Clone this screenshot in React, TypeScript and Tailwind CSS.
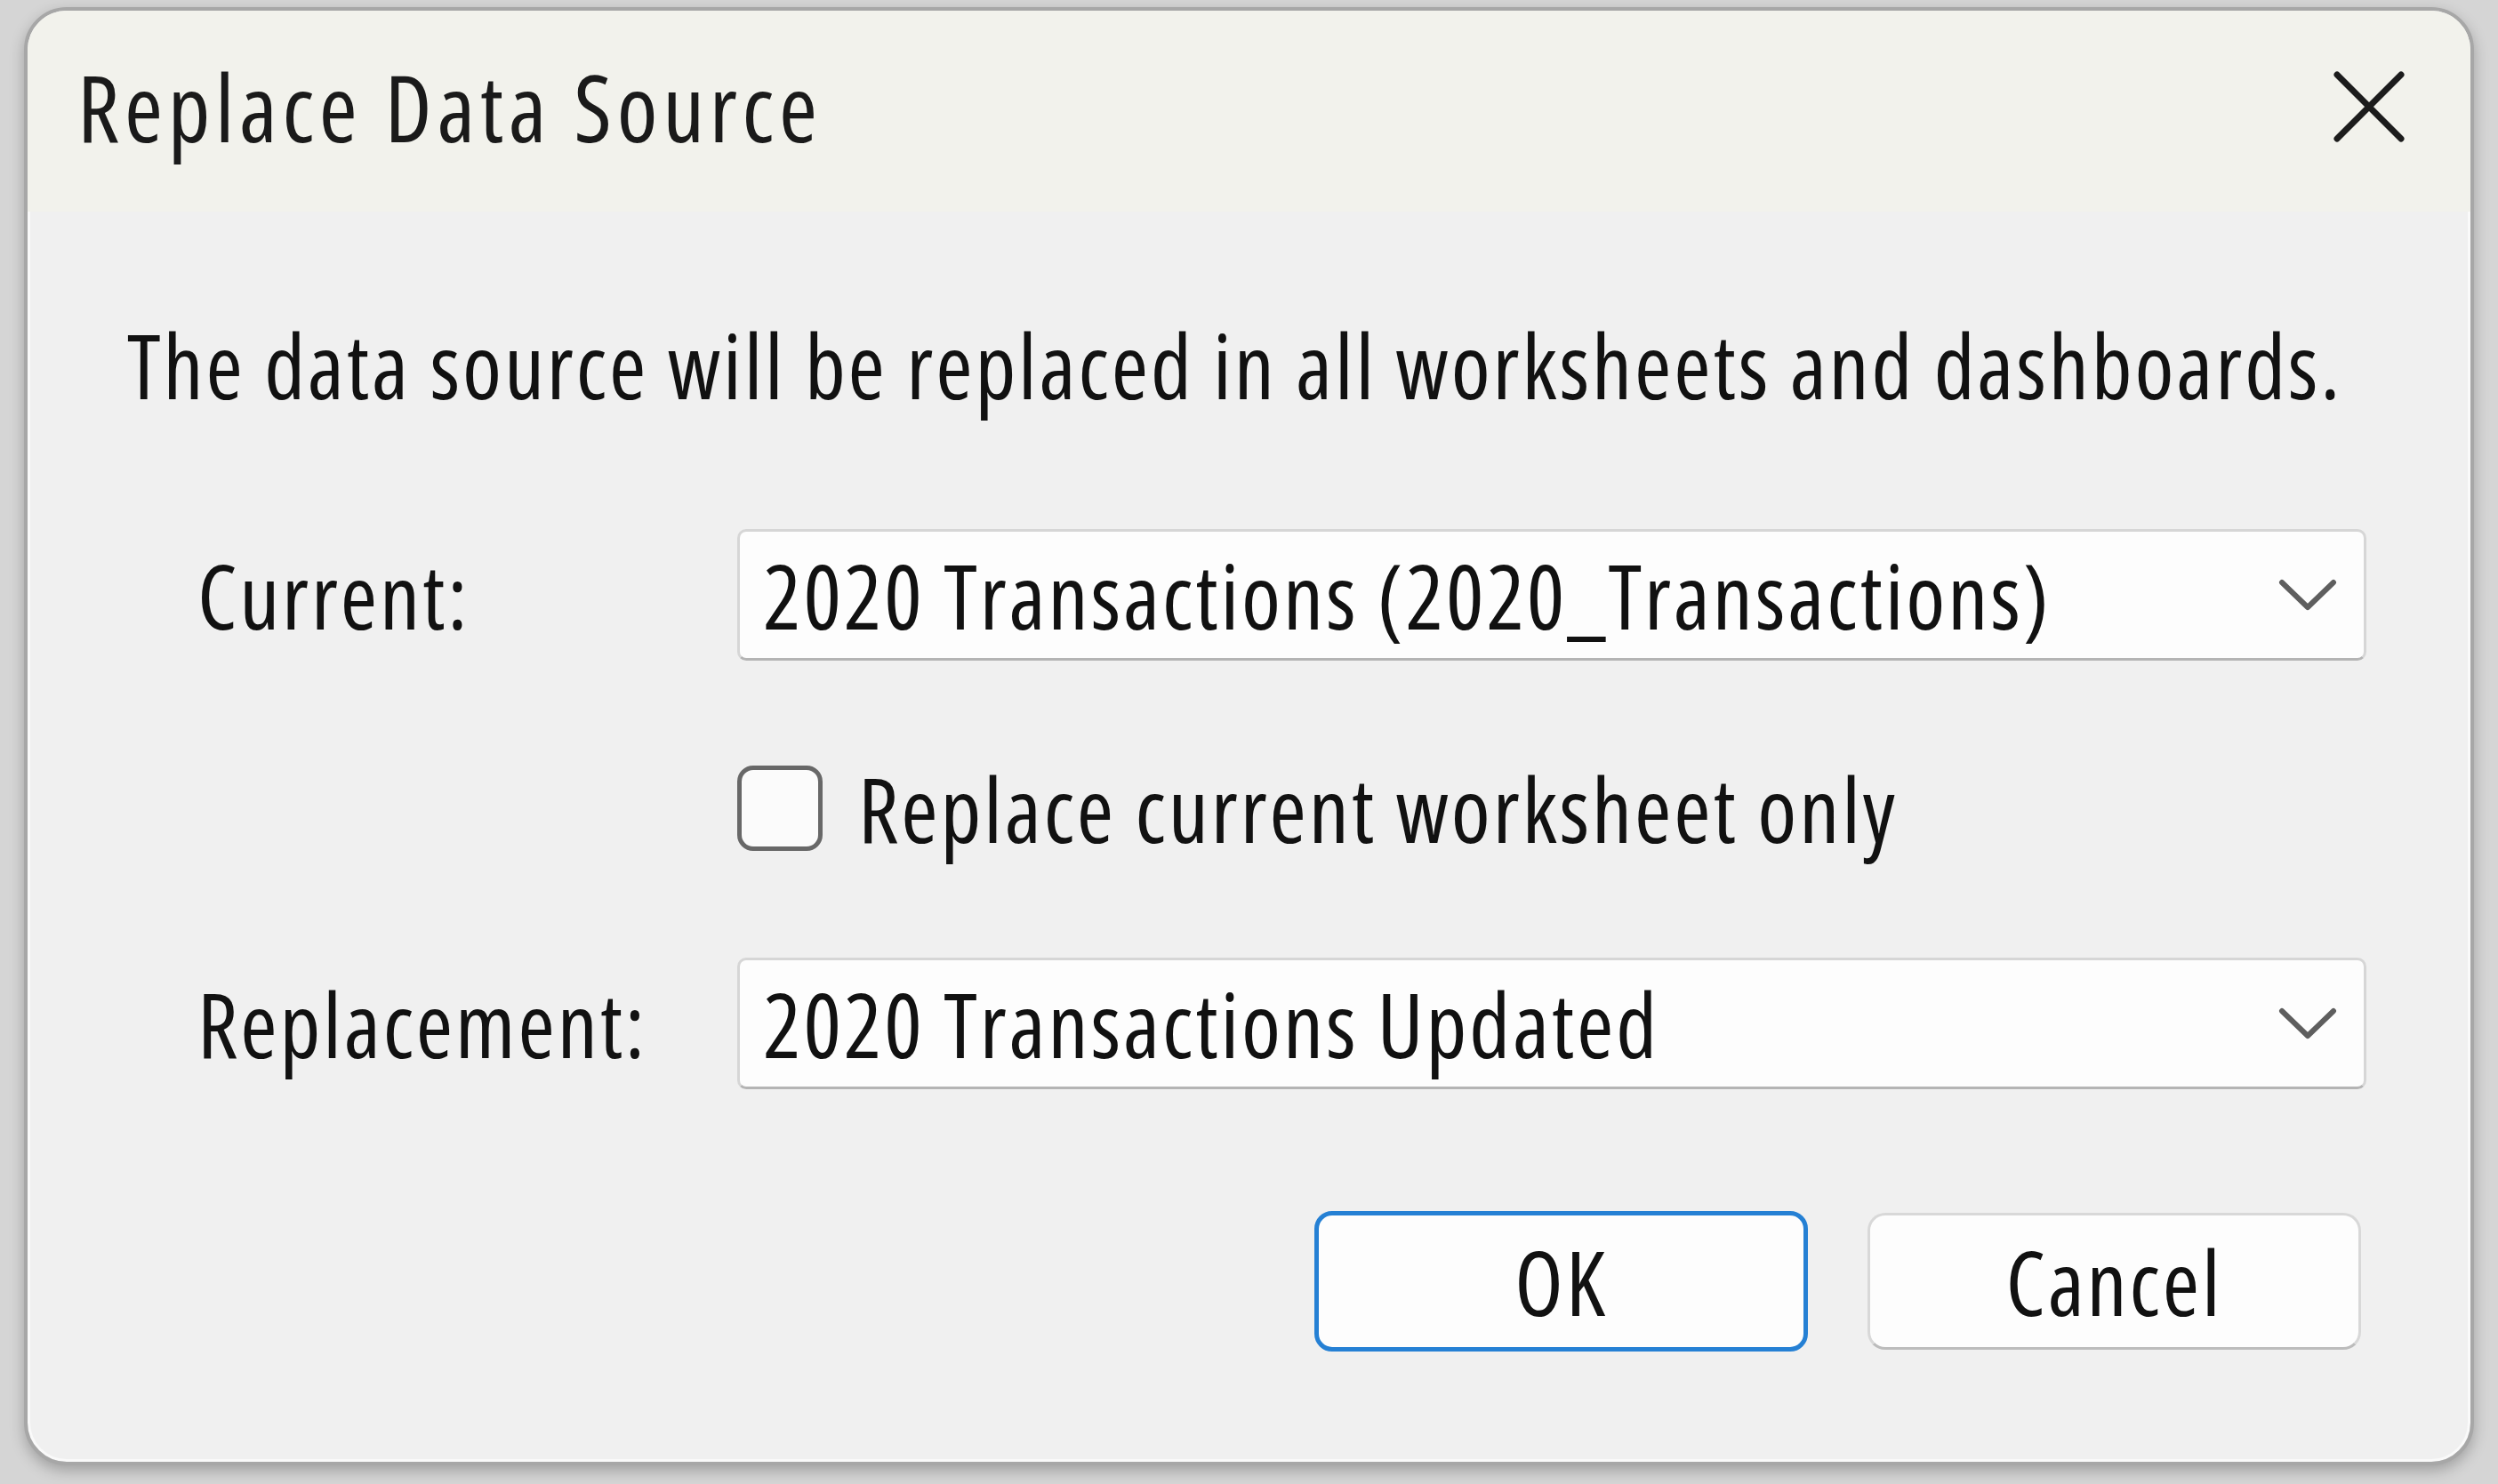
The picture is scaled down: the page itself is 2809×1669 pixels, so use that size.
import { useState } from 'react';

const fontCls = "font-['Open_Sans',sans-serif] [font-stretch:75%] font-medium leading-[98px]";
const textCls = fontCls + ' text-[100px] tracking-[2.9px] text-[#111]';

function Chevron() {
  return (
    <svg width="66" height="36" viewBox="0 0 66 36" fill="none" className="shrink-0">
      <polyline points="4,4 33,32 62,4" stroke="#5e5e5e" strokeWidth="6" strokeLinecap="round" strokeLinejoin="round" />
    </svg>
  );
}

function Select({ value }: { value: string }) {
  return (
    <div className="flex h-[148px] w-[1832px] items-center justify-between rounded-[10px] border-[3px] border-[#d6d6d6] border-b-[#b4b4b4] bg-[#fdfdfd] pl-[26px] pr-[30px]">
      <span className={textCls + ' whitespace-nowrap'}>{value}</span>
      <Chevron />
    </div>
  );
}

function App() {
  const [onlyCurrent, setOnlyCurrent] = useState(false);

  return (
    <div className="flex h-[1669px] w-[2809px] bg-[#d5d5d5] pl-[27px] pt-[8px]">
      <div className="flex h-[1640px] w-[2755px] flex-col overflow-hidden rounded-[48px] border-[4px] border-[#a7a7a7] bg-[#f0f0f0] shadow-[0_6px_16px_rgba(0,0,0,0.25),inset_0_0_0_3px_#fafafa]">
        {/* title bar */}
        <div className="flex h-[226px] shrink-0 items-center justify-between bg-[#f2f2ec] pb-[10px] pl-[56px] pr-[72px]">
          <h1 className={fontCls + ' text-[104px] tracking-[5.7px] text-[#1a1a1a]'}>Replace Data Source</h1>
          <button className="flex h-[84px] w-[84px] items-center justify-center">
            <svg width="80" height="80" viewBox="0 0 80 80" fill="none">
              <path d="M4 4 L76 76 M76 4 L4 76" stroke="#1c1c1c" strokeWidth="7" strokeLinecap="round" />
            </svg>
          </button>
        </div>

        {/* body */}
        <div className="flex flex-1 flex-col pl-[112px] pr-[118px]">
          <p className={textCls + ' mt-[123px] whitespace-nowrap'}>
            The data source will be replaced in all worksheets and dashboards.
          </p>

          <div className="mt-[136px] grid grid-cols-[607px_1832px] items-center pl-[79px]">
            <span className={textCls}>Current:</span>
            <Select value="2020 Transactions (2020_Transactions)" />

            <div />
            <label className="mt-[118px] flex h-[96px] cursor-pointer items-center gap-[40px]">
              <span
                onClick={() => setOnlyCurrent(!onlyCurrent)}
                className="h-[96px] w-[96px] shrink-0 rounded-[18px] border-[5px] border-[#686868] bg-[#fbfbfb]"
              />
              <span className={textCls + ' whitespace-nowrap'}>Replace current worksheet only</span>
            </label>

            <span className={textCls + ' mt-[120px]'}>Replacement:</span>
            <div className="mt-[120px]">
              <Select value="2020 Transactions Updated" />
            </div>
          </div>

          <div className="mt-[137px] flex justify-end gap-[67px] pr-[5px]">
            <button className={textCls + ' h-[158px] w-[555px] rounded-[20px] border-[5px] border-[#2580d4] bg-[#fdfdfd]'}>
              OK
            </button>
            <button className={textCls + ' mt-[2px] h-[154px] w-[555px] rounded-[20px] border-[3px] border-[#d8d8d8] border-b-[#bcbcbc] bg-[#fdfdfd]'}>
              Cancel
            </button>
          </div>
        </div>
      </div>
    </div>
  );
}

export default App;
